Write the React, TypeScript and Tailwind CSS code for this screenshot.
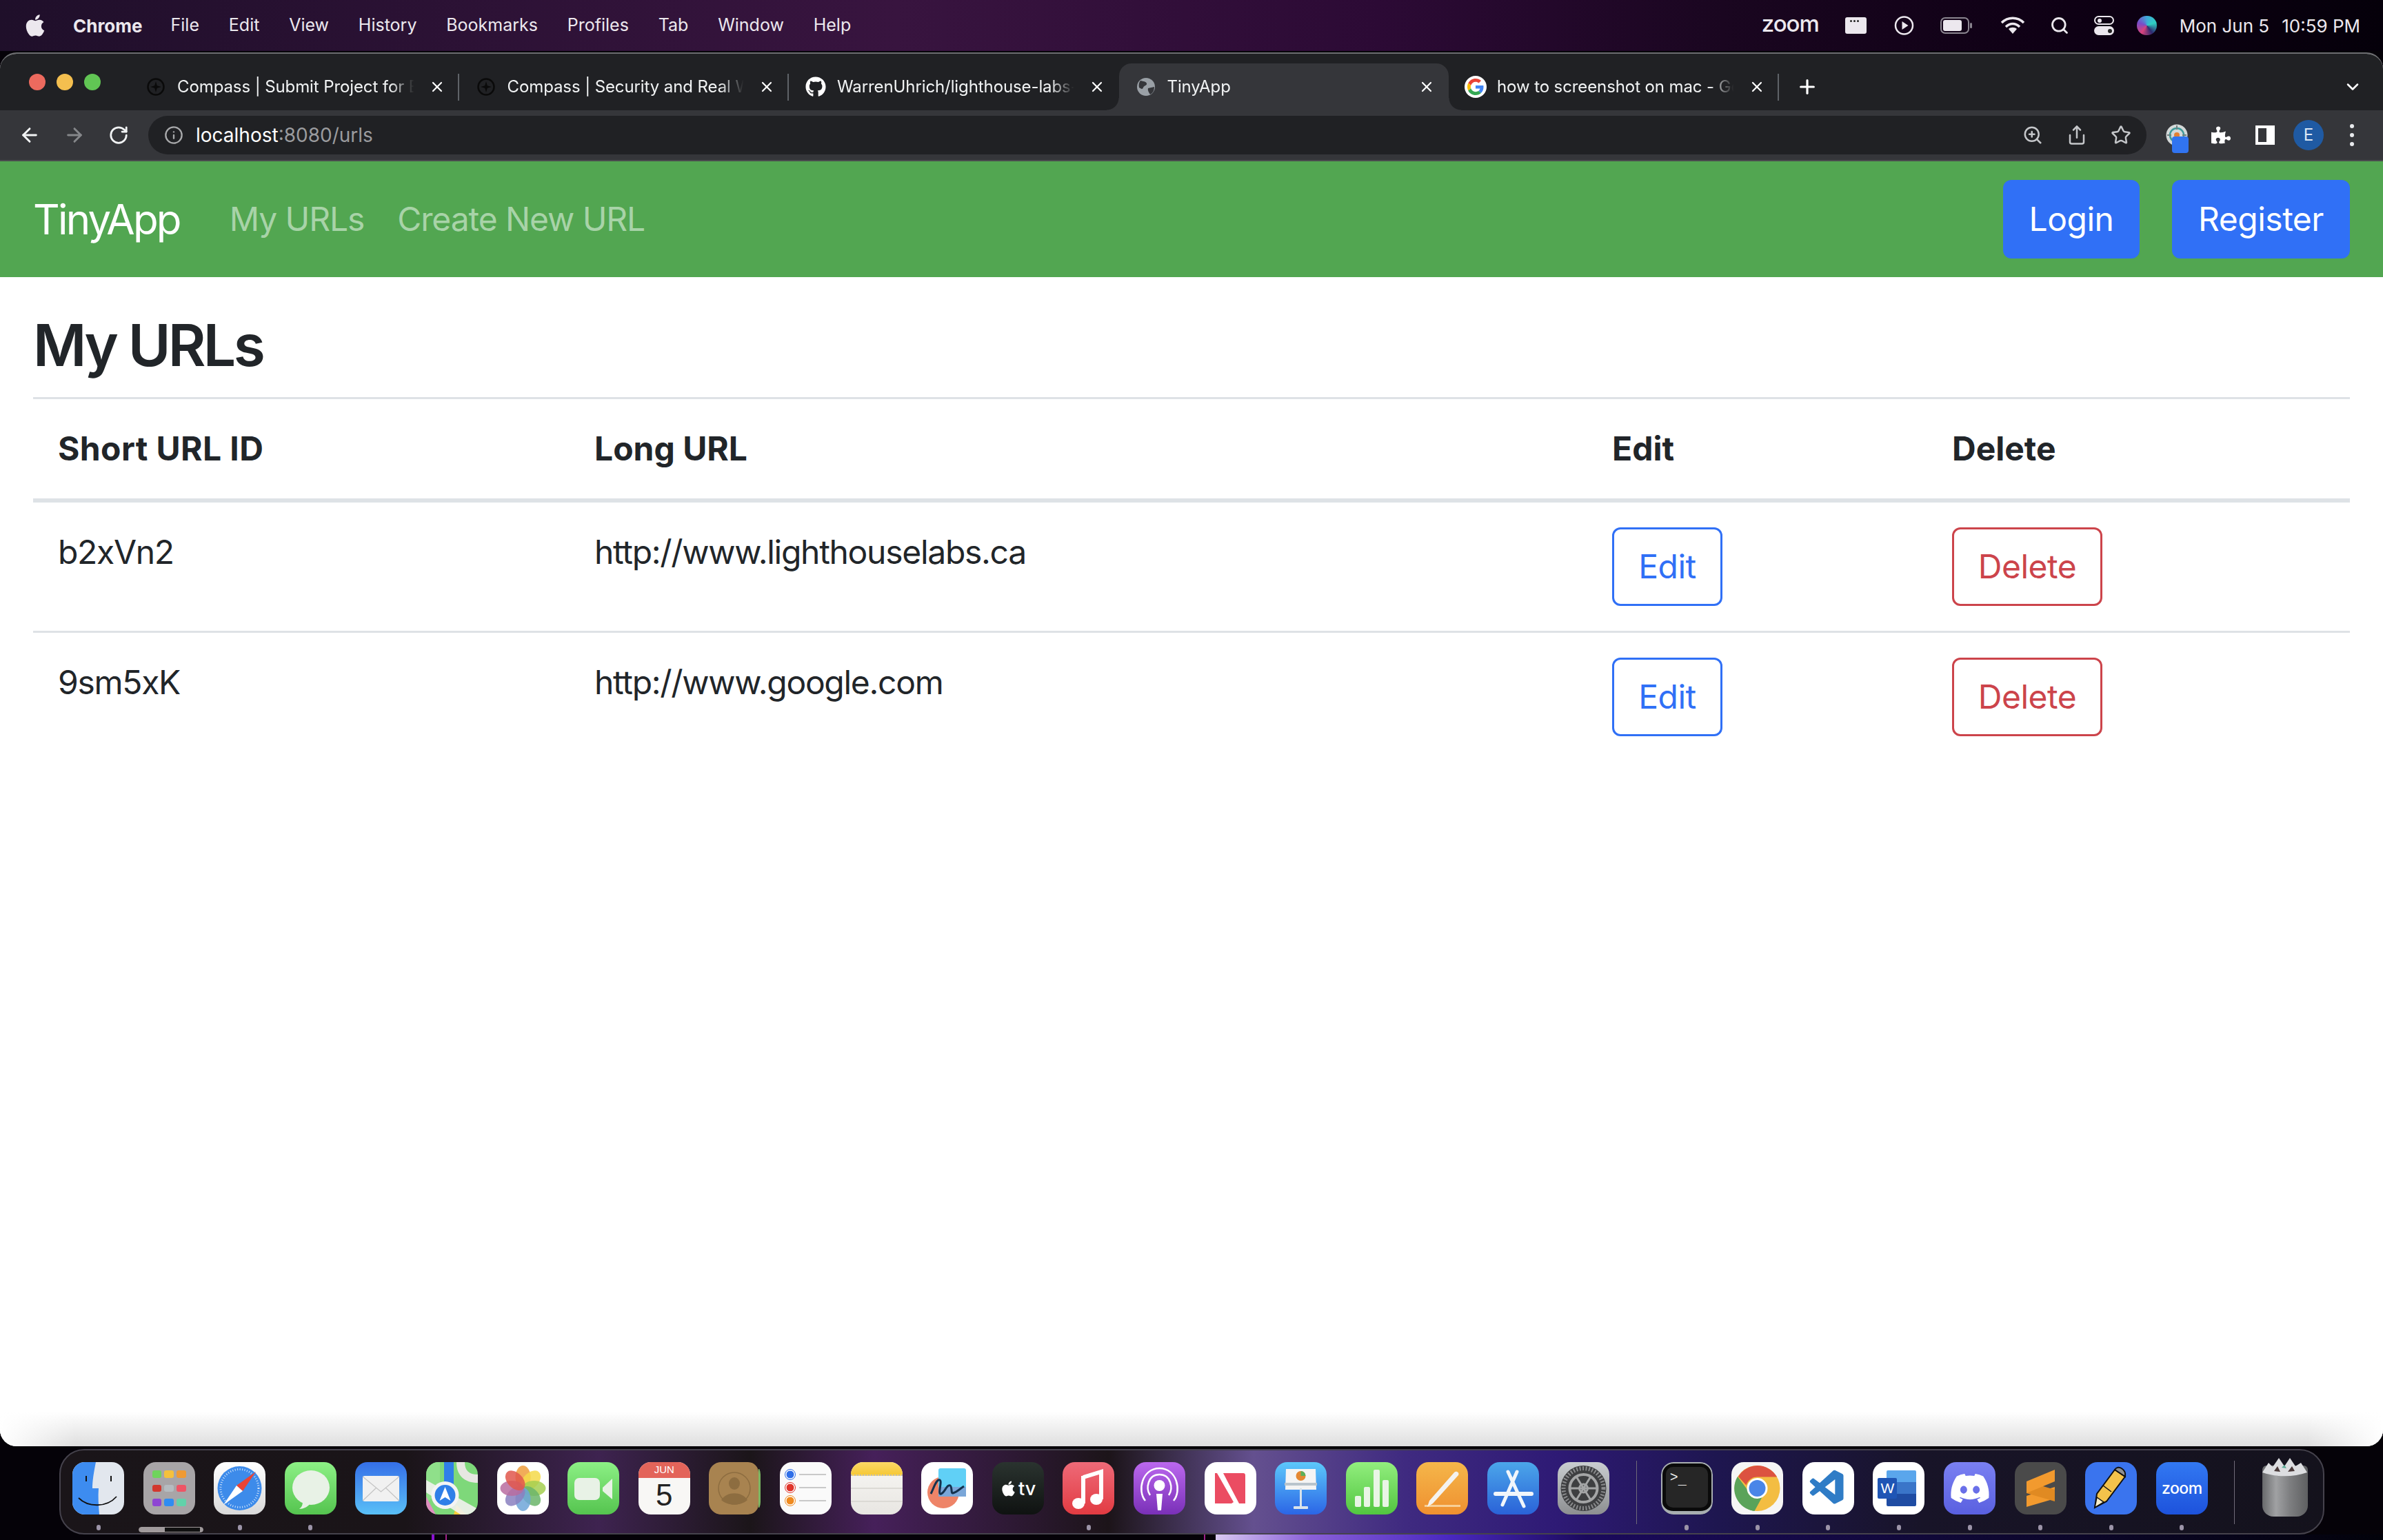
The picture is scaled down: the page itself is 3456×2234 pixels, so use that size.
import { ReactNode } from "react";
import {
  ArrowLeft,
  ArrowRight,
  ChevronDown,
  Info,
  Plus,
  RotateCw,
  Search,
  Share,
  Star,
  X,
  ZoomIn,
} from "lucide-react";
import { FaApple, FaDiscord, FaGithub, FaPuzzlePiece } from "react-icons/fa";
import { VscVscode } from "react-icons/vsc";

const menuItems = ["File", "Edit", "View", "History", "Bookmarks", "Profiles", "Tab", "Window", "Help"];

const urls = [
  { id: "b2xVn2", long: "http://www.lighthouselabs.ca" },
  { id: "9sm5xK", long: "http://www.google.com" },
];

const CompassIcon = () => (
  <svg viewBox="0 0 26 30" className="w-[26px] h-[30px] shrink-0" fill="none">
    <circle cx="13" cy="15" r="11.5" stroke="#0a0a0a" strokeWidth="2.5" />
    <path d="M13 7l1.8 6.2L21 15l-6.2 1.8L13 23l-1.8-6.2L5 15l6.2-1.8z" fill="#0a0a0a" />
  </svg>
);

const GoogleIcon = () => (
  <div className="w-[32px] h-[32px] shrink-0 rounded-full bg-white flex items-center justify-center">
    <svg viewBox="0 0 48 48" className="w-[24px] h-[24px]">
      <path fill="#ea4335" d="M24 9.5c3.5 0 6.7 1.2 9.2 3.6l6.9-6.9C35.9 2.4 30.5 0 24 0 14.6 0 6.5 5.4 2.6 13.2l8 6.2C12.4 13.7 17.700 9.500 24 9.500z" />
      <path fill="#4285f4" d="M47 24.500c0-1.600-.100-3.100-.400-4.500H24v9h12.900c-.600 3-2.200 5.500-4.800 7.200l7.700 6C44.400 38 47 31.800 47 24.500z" />
      <path fill="#fbbc05" d="M10.500 28.600c-.500-1.400-.800-3-.800-4.600s.300-3.200.800-4.600l-8-6.200C.900 16.500 0 20.100 0 24s.900 7.500 2.600 10.800z" />
      <path fill="#34a853" d="M24 48c6.500 0 11.900-2.100 15.900-5.800l-7.700-6c-2.200 1.500-4.900 2.300-8.200 2.300-6.300 0-11.600-4.200-13.500-9.900l-8 6.200C6.500 42.600 14.600 48 24 48z" />
    </svg>
  </div>
);

const GlobeIcon = () => (
  <svg viewBox="0 0 28 28" className="w-[28px] h-[28px] shrink-0">
    <circle cx="14" cy="14" r="13" fill="#9aa0a6" />
    <path d="M6 5c4 1 8 1 9 4s-4 3-5 6-3 2-6 0C3 11 4 7 6 5zM17 16c3-1 6-1 9-2 0 5-2 9-6 11-2-3-4-6-3-9z" fill="#35363a" />
  </svg>
);

const tabs = [
  { title: "Compass | Submit Project for E", icon: <CompassIcon /> },
  { title: "Compass | Security and Real W", icon: <CompassIcon /> },
  { title: "WarrenUhrich/lighthouse-labs-", icon: <FaGithub className="w-[30px] h-[30px] shrink-0 text-white" /> },
  { title: "TinyApp", icon: <GlobeIcon />, active: true },
  { title: "how to screenshot on mac - Go", icon: <GoogleIcon /> },
];

const Tab = ({ title, icon, active, divider }: { title: string; icon: ReactNode; active?: boolean; divider?: boolean }) => (
  <div
    className={`relative w-[478.500px] h-[68px] shrink-0 flex items-center pl-[26px] pr-[20px] gap-[18px] rounded-t-[18px] ${
      active ? "bg-[#35363a]" : ""
    }`}
  >
    {active && (
      <>
        <div className="absolute left-[-18px] bottom-0 w-[18px] h-[18px] bg-[radial-gradient(circle_at_0_0,#202124_17px,#35363a_18px)]" />
        <div className="absolute right-[-18px] bottom-0 w-[18px] h-[18px] bg-[radial-gradient(circle_at_100%_0,#202124_17px,#35363a_18px)]" />
      </>
    )}
    <div className="w-[26px] h-[32px] shrink-0 flex items-center justify-center">{icon}</div>
    <span className="flex-1 min-w-0 whitespace-nowrap text-[24px] tracking-[-0.100px] text-[#f1f3f4] [mask-image:linear-gradient(90deg,#000_89%,transparent_99%)]">
      {title}
    </span>
    <X className="w-[24px] h-[24px] shrink-0 text-white" strokeWidth={2.2} />
    {divider && <div className="absolute right-0 top-[15px] w-[2px] h-[39px] bg-[#5f6368]" />}
  </div>
);

const StatusIcons = () => (
  <div className="flex items-center text-[#ece8ee]">
    <span className="text-[33px] font-medium tracking-[-1px] w-[82px] text-center leading-none pb-[6px]">zoom</span>
    <div className="ml-[39px] w-[31px] h-[24px] rounded-[3px] bg-[#ece8ee] flex items-start gap-[2px] pl-[7px] pt-[4px]">
      <i className="w-[3px] h-[3px] rounded-full bg-[#222]" />
      <i className="w-[3px] h-[3px] rounded-full bg-[#222]" />
      <i className="w-[3px] h-[3px] rounded-full bg-[#222]" />
    </div>
    <svg viewBox="0 0 28 28" className="ml-[40px] w-[29px] h-[28px]" fill="none">
      <circle cx="14" cy="14" r="12.500" stroke="#ece8ee" strokeWidth="2.500" />
      <path d="M11 8l9 6-9 6z" fill="#ece8ee" />
    </svg>
    <svg viewBox="0 0 46 24" className="ml-[38px] w-[46px] h-[24px]" fill="none">
      <rect x="1" y="1" width="40" height="22" rx="6" stroke="#8b8690" strokeWidth="2" />
      <rect x="4" y="4" width="27" height="16" rx="3" fill="#ece8ee" />
      <rect x="43" y="8" width="3" height="8" rx="1.500" fill="#8b8690" />
    </svg>
    <svg viewBox="0 0 36 26" className="ml-[41px] w-[36px] h-[26px]" fill="none" stroke="#ece8ee" strokeWidth="3.500">
      <path d="M2 9c9-9 23-9 32 0M8 15c6-6 14-6 20 0" />
      <path d="M12 18c3-3 9-3 12 0l-6 7z" fill="#ece8ee" stroke="none" />
    </svg>
    <Search className="ml-[36px] w-[28px] h-[28px]" strokeWidth={2.4} />
    <div className="ml-[36px] w-[29px] h-[28px] flex flex-col gap-[2px]">
      <div className="h-[13px] rounded-full border-2 border-[#ece8ee] flex items-center pl-[3px]">
        <i className="w-[6px] h-[6px] rounded-full bg-[#ece8ee]" />
      </div>
      <div className="h-[13px] rounded-full bg-[#ece8ee] flex items-center justify-end pr-[3px]">
        <i className="w-[6px] h-[6px] rounded-full bg-[#222]" />
      </div>
    </div>
    <div className="ml-[33px] w-[29px] h-[28px] rounded-full bg-[conic-gradient(#3fa9d8,#2fd0c0,#2d2a70,#d7437c,#7a4bc8,#3fa9d8)]" />
    <span className="ml-[33px] text-[26px] whitespace-nowrap">Mon Jun 5</span>
    <span className="ml-[18px] text-[26px] whitespace-nowrap">10:59 PM</span>
  </div>
);

const Finder = () => (
  <div className="relative w-full h-full bg-[#e2e7ee]">
    <svg viewBox="0 0 75 76" className="absolute inset-0">
      <path d="M0 0h34c-3 15-5 27-5 38h9c-1 12 0 26 1 38H0z" fill="#3d8cf0" />
      <path d="M9 52c14 14 41 14 55-2" fill="none" stroke="#111" strokeWidth="1.800" />
      <rect x="19" y="20" width="2" height="8" fill="#111" />
      <rect x="55" y="20" width="2" height="8" fill="#111" />
    </svg>
  </div>
);

const launchColors = ["#6fd45c", "#f5c13c", "#ef9a34", "#d2382e", "#b5bcc0", "#ee5565", "#8e45d3", "#2f8cf2", "#62d2aa"];
const Launchpad = () => (
  <div className="w-full h-full bg-[#a8a5a7] grid grid-cols-3 gap-x-[4px] gap-y-[10px] px-[13px] py-[12px]">
    {launchColors.map((c) => (
      <div key={c} className="rounded-[3px]" style={{ background: c }} />
    ))}
  </div>
);

const Safari = () => (
  <svg viewBox="0 0 75 76" className="w-full h-full bg-[linear-gradient(#fff,#d9d9d9)]">
    <circle cx="37.500" cy="38" r="32" fill="#3d8bea" />
    <circle cx="37.500" cy="38" r="27.500" fill="none" stroke="#cfe3fb" strokeWidth="3" strokeDasharray="1 2.500" />
    <path d="M61 14L33 34l9 8z" fill="#ea4335" />
    <path d="M14 62l28-20-9-8z" fill="#fff" />
  </svg>
);

const Messages = () => (
  <svg viewBox="0 0 75 76" className="w-full h-full bg-[linear-gradient(#8cf085,#55c44f)]">
    <ellipse cx="38" cy="37" rx="27" ry="25" fill="#e8f2e6" />
    <path d="M26 56c0 6-1 9-5 12 6 0 12-3 15-7z" fill="#e8f2e6" />
  </svg>
);

const Mail = () => (
  <svg viewBox="0 0 75 76" className="w-full h-full bg-[linear-gradient(#356fe8,#5ac0f7)]">
    <rect x="11" y="20" width="53" height="37" rx="3" fill="#f1f1f1" />
    <path d="M11 21l26.500 22L64 21M11 56l20-19M64 56L44 37" fill="none" stroke="#c4c4c4" strokeWidth="1.200" />
  </svg>
);

const Maps = () => (
  <svg viewBox="0 0 75 76" className="w-full h-full bg-[#7ed87a]">
    <path d="M0 0h20v40L0 60z" fill="#8fe08a" />
    <path d="M44 0c0 20 12 30 31 30V18C62 18 56 12 56 0z" fill="#e7e7e2" />
    <path d="M0 50l14 26H0z" fill="#e08dc0" />
    <path d="M44 62l14 14h-18z" fill="#f5cf3c" />
    <path d="M0 26l75 42v8H50L0 44z" fill="#f2f2ee" opacity=".9" />
    <rect x="26" y="0" width="14" height="36" fill="#2f7fe8" />
    <circle cx="27.500" cy="48" r="20" fill="#f4f4f4" />
    <circle cx="27.500" cy="48" r="15" fill="#2f7fe8" />
    <path d="M27.500 36l8 20-8-5-8 5z" fill="#fff" />
  </svg>
);

const petalColors = ["#ef9d3c", "#f4d94a", "#a4cf50", "#6bb56a", "#6fa6d8", "#8a80c0", "#b86ca0", "#e0574c"];
const Photos = () => (
  <svg viewBox="0 0 75 76" className="w-full h-full bg-white">
    {petalColors.map((c, i) => (
      <ellipse key={c} cx="37.500" cy="22" rx="11" ry="17" fill={c} opacity=".85" transform={`rotate(${i * 45} 37.500 38)`} />
    ))}
  </svg>
);

const FaceTime = () => (
  <svg viewBox="0 0 75 76" className="w-full h-full bg-[linear-gradient(#8cf085,#55c44f)]">
    <rect x="10" y="23" width="37" height="32" rx="7" fill="#e8f2e6" />
    <path d="M51 37l14-13v30L51 42z" fill="#e8f2e6" />
  </svg>
);

const CalendarTile = () => (
  <div className="w-full h-full bg-[#f8f7f5] flex flex-col items-center font-['Liberation_Sans',sans-serif]">
    <div className="w-full h-[23px] bg-[#e3645a] text-white text-[15px] leading-[22px] text-center">JUN</div>
    <div className="text-[44px] leading-[50px] text-[#222]">5</div>
  </div>
);

const Contacts = () => (
  <svg viewBox="0 0 75 76" className="w-full h-full">
    <path d="M72 10h3v56h-3z" fill="#7bb662" />
    <rect width="72" height="76" rx="15" fill="#a88350" />
    <circle cx="37" cy="38" r="23" fill="none" stroke="#8d6d40" strokeWidth="1.500" />
    <ellipse cx="37" cy="31" rx="8" ry="9" fill="#8d6d40" />
    <path d="M18 55c8-13 30-13 38 0-10 9-28 9-38 0z" fill="#8d6d40" />
  </svg>
);

const Reminders = () => (
  <svg viewBox="0 0 75 76" className="w-full h-full bg-[#fafafa]">
    {[["#2f6fe8", 18], ["#e0352b", 37], ["#ef8a1f", 56]].map(([c, y]) => (
      <g key={c as string}>
        <circle cx="15" cy={y as number} r="6" fill={c as string} stroke="#fff" strokeWidth="1" />
        <circle cx="15" cy={y as number} r="7.500" fill="none" stroke={c as string} strokeWidth="1" />
        <rect x="28" y={(y as number) - 1} width="39" height="2" fill="#c9c9c9" />
      </g>
    ))}
  </svg>
);

const Notes = () => (
  <div className="w-full h-full bg-[linear-gradient(#f8f7f4,#e8e6e2)] flex flex-col">
    <div className="h-[20px] bg-[linear-gradient(#fbd766,#f6c937)] border-b-2 border-dotted border-[#bdbab4]" />
    <div className="h-[18px] border-b-2 border-[#dcdad5] mt-[1px]" />
    <div className="h-[19px] border-b-2 border-[#dcdad5]" />
  </div>
);

const Freeform = () => (
  <svg viewBox="0 0 75 76" className="w-full h-full bg-white">
    <circle cx="32" cy="44" r="23" fill="#ee8468" />
    <rect x="25" y="9" width="40" height="41" rx="3" fill="#60d0f6" />
    <rect x="25" y="36" width="40" height="14" fill="#7aa6d8" />
    <path d="M14 46c4-8 8-22 13-20 4 2-4 22 2 20 6-3 8-14 13-12 3 2 1 12 4 11 5-1 10-6 16-10" fill="none" stroke="#14324f" strokeWidth="3" />
  </svg>
);

const TvTile = () => (
  <div className="w-full h-full bg-[linear-gradient(#2a332f,#0f1211)] flex items-center justify-center gap-[2px] text-white">
    <FaApple className="w-[25px] h-[25px]" />
    <span className="text-[27px] font-medium leading-none font-['Inter',sans-serif]">tv</span>
  </div>
);

const MusicTile = () => (
  <svg viewBox="0 0 75 76" className="w-full h-full bg-[linear-gradient(#ee6a78,#e23b42)]">
    <path d="M30 22l26-8v40" fill="none" stroke="#fff" strokeWidth="6" />
    <path d="M30 20v40" stroke="#fff" strokeWidth="6" />
    <ellipse cx="23" cy="60" rx="9" ry="8" fill="#fff" />
    <ellipse cx="49" cy="54" rx="9" ry="8" fill="#fff" />
  </svg>
);

const Podcasts = () => (
  <svg viewBox="0 0 75 76" className="w-full h-full bg-[linear-gradient(#bb68ee,#7a30b8)]" fill="none" stroke="#fff" strokeWidth="2.500">
    <path d="M17 56C5 42 12 9 37.500 9S70 42 58 56" />
    <path d="M24 48c-7-10-3-30 13.500-30S58 38 51 48" />
    <circle cx="37.500" cy="34" r="8" fill="#fff" stroke="none" />
    <path d="M33 46h9l-2 24h-5z" fill="#fff" stroke="none" />
  </svg>
);

const NewsTile = () => (
  <svg viewBox="0 0 75 76" className="w-full h-full bg-white">
    <path d="M15 16h3l24 42-3 2H15zM27 16h29c2 0 3 1 3 3v41h-9z" fill="#eb4c62" />
  </svg>
);

const Keynote = () => (
  <svg viewBox="0 0 75 76" className="w-full h-full bg-[linear-gradient(#5cc8fb,#2b65e6)]">
    <path d="M16 10h43l1 30H15z" fill="#f4f4f4" />
    <rect x="14" y="30" width="47" height="4" fill="#b9c4cc" />
    <circle cx="37.500" cy="20" r="7" fill="#e48832" />
    <path d="M37.500 20v-7a7 7 0 017 7z" fill="#5bb05a" />
    <rect x="36" y="38" width="3" height="28" fill="#d9e3ea" />
    <rect x="27" y="64" width="21" height="4" rx="1" fill="#d9e3ea" />
  </svg>
);

const NumbersTile = () => (
  <svg viewBox="0 0 75 76" className="w-full h-full bg-[linear-gradient(#92ee7e,#52c640)]" fill="#e9f5e5">
    <rect x="13" y="49" width="9" height="16" rx="2" />
    <rect x="26" y="36" width="9" height="29" rx="2" />
    <rect x="40" y="11" width="9" height="54" rx="2" />
    <rect x="53" y="26" width="9" height="39" rx="2" />
  </svg>
);

const Pages = () => (
  <svg viewBox="0 0 75 76" className="w-full h-full bg-[linear-gradient(#f5b64a,#ef9030)]">
    <rect x="12" y="62" width="52" height="3" fill="#f8cf96" />
    <path d="M55 15c3-3 8 0 6 4L24 60l-8 5 3-9z" fill="#f4f2ef" />
  </svg>
);

const AppStore = () => (
  <svg viewBox="0 0 75 76" className="w-full h-full bg-[linear-gradient(#4ba6ea,#2a62d8)]" stroke="#f1f6fb" strokeLinecap="round" fill="none">
    <path d="M30 14l23 50M43 14L22 62" strokeWidth="5" />
    <path d="M12 46h52" strokeWidth="6" />
  </svg>
);

const SettingsTile = () => (
  <svg viewBox="0 0 75 76" className="w-full h-full bg-[linear-gradient(#c9cdd0,#8d8f91)]" fill="none">
    <circle cx="37.500" cy="38" r="33" fill="#3e3f41" />
    <circle cx="37.500" cy="38" r="29" stroke="#8a8b8d" strokeWidth="6" strokeDasharray="2 2.500" />
    <circle cx="37.500" cy="38" r="20" stroke="#a4a5a6" strokeWidth="4" />
    <circle cx="37.500" cy="38" r="6" stroke="#a4a5a6" strokeWidth="3" />
    <path d="M18 38h39M27 21l21 34M48 21L27 55" stroke="#a4a5a6" strokeWidth="3" />
  </svg>
);

const Terminal = () => (
  <div className="w-full h-full bg-[#0a0a0a] border-2 border-[#a8aeb0] border-b-[5px] rounded-[18px] p-[5px]">
    <div className="w-full h-full rounded-[10px] bg-[#262626] text-[#eee] font-['Liberation_Mono',monospace] text-[20px] leading-[22px] pl-[6px] pt-[5px]">
      &gt;<span className="relative top-[4px]">_</span>
    </div>
  </div>
);

const ChromeTile = () => (
  <svg viewBox="0 0 75 76" className="w-full h-full bg-[#f5f5f5]">
    <circle cx="37.500" cy="38" r="33" fill="#f3bd42" />
    <path d="M37.500 5a33 33 0 0128.600 16.500H37.500c-9 0-14 6-16 12L10 21A33 33 0 0137.500 5z" fill="#dc5240" />
    <path d="M9 21a33 33 0 0024.500 50l12-22c-8 3-17 0-21-7z" fill="#5aa35a" />
    <circle cx="37.500" cy="38" r="15" fill="#fff" />
    <circle cx="37.500" cy="38" r="12" fill="#4a86e8" />
  </svg>
);

const Word = () => (
  <div className="relative w-full h-full bg-white">
    <div className="absolute left-[20px] top-[12px] w-[43px] h-[52px] rounded-[2px] bg-[linear-gradient(#5aa6ec_0_33%,#3a75c9_33%_66%,#1f4ca3_66%)]" />
    <div className="absolute left-[7px] top-[23px] w-[28px] h-[30px] rounded-[2px] bg-[#1f55b5] text-white text-center text-[21px] leading-[30px] font-['Liberation_Sans',sans-serif]">
      W
    </div>
  </div>
);

const Sublime = () => (
  <svg viewBox="0 0 75 76" className="w-full h-full bg-[#4a4a4a]">
    <path d="M17 49l41-13v17L17 65z" fill="#f29a2e" />
    <path d="M17 28l41 12v17L17 45z" fill="#e08a22" />
    <path d="M17 28l41-17v17L17 45z" fill="#f29a2e" />
  </svg>
);

const CotEditor = () => (
  <svg viewBox="0 0 75 76" className="w-full h-full bg-[#3a74ee]">
    <path d="M14 66l3-20 26-35 15 10-27 36z" fill="#f3c24b" stroke="#111" strokeWidth="2" />
    <path d="M14 66l3-15 10 7z" fill="#f6ecc8" stroke="#111" strokeWidth="1.500" />
    <path d="M43 11c5-8 17 0 15 10z" fill="#8f9092" stroke="#111" strokeWidth="2" />
    <path d="M26 34l12 9" stroke="#111" strokeWidth="1.500" />
  </svg>
);

const Trash = () => (
  <div className="relative w-[75px] h-[88px] mt-[-7px]">
    <div className="absolute left-[5px] top-[12px] w-[66px] h-[74px] rounded-b-[16px] rounded-t-[6px] bg-[linear-gradient(90deg,#68696b,#a0a1a3_30%,#7e7f81_60%,#5e5f61)]" />
    <svg viewBox="0 0 75 30" className="absolute left-0 top-0 w-[75px] h-[30px]">
      <path d="M5 22l9-14 6 6 9-13 8 12 8-12 8 12 8-5 9 14c-20 7-45 7-65 0z" fill="#dcdde0" />
      <path d="M22 20l5-7 4 8zM42 21l6-8 4 7z" fill="#4a3a3a" />
      <path d="M33 15l4-4 3 5z" fill="#5fae9a" />
    </svg>
  </div>
);

const ZoomTile = () => (
  <div className="w-full h-full bg-[linear-gradient(#3278f2,#1d52dc)] flex items-center justify-center text-white text-[23px] font-medium tracking-[-0.500px] font-['Inter',sans-serif]">
    zoom
  </div>
);

type DockEntry = { key: string; node: ReactNode; dot?: boolean };

const DockIcon = ({ node, dot }: DockEntry) => (
  <div className="w-[75px] shrink-0 flex flex-col items-center">
    <div className="w-[75px] h-[76px] rounded-[18px] overflow-hidden">{node}</div>
    <div className={`mt-[15px] w-[6px] h-[8px] rounded-full ${dot ? "bg-[#9c94a8]" : ""}`} />
  </div>
);

const firstApps: DockEntry[] = [
  { key: "finder", node: <Finder />, dot: true },
  { key: "launchpad", node: <Launchpad /> },
  { key: "safari", node: <Safari />, dot: true },
  { key: "messages", node: <Messages />, dot: true },
  { key: "mail", node: <Mail /> },
  { key: "maps", node: <Maps /> },
  { key: "photos", node: <Photos /> },
  { key: "facetime", node: <FaceTime /> },
  { key: "calendar", node: <CalendarTile /> },
  { key: "contacts", node: <Contacts /> },
  { key: "reminders", node: <Reminders /> },
  { key: "notes", node: <Notes /> },
  { key: "freeform", node: <Freeform /> },
  { key: "tv", node: <TvTile /> },
  { key: "music", node: <MusicTile />, dot: true },
  { key: "podcasts", node: <Podcasts /> },
  { key: "news", node: <NewsTile /> },
  { key: "keynote", node: <Keynote /> },
  { key: "numbers", node: <NumbersTile /> },
  { key: "pages", node: <Pages /> },
  { key: "appstore", node: <AppStore /> },
  { key: "settings", node: <SettingsTile /> },
];

const secondApps: DockEntry[] = [
  { key: "terminal", node: <Terminal />, dot: true },
  { key: "chrome", node: <ChromeTile />, dot: true },
  {
    key: "vscode",
    node: (
      <div className="w-full h-full bg-white flex items-center justify-center">
        <VscVscode className="w-[60px] h-[60px] text-[#2f7cc6]" />
      </div>
    ),
    dot: true,
  },
  { key: "word", node: <Word />, dot: true },
  {
    key: "discord",
    node: (
      <div className="w-full h-full bg-[linear-gradient(#7a80f2,#5a60e0)] flex items-center justify-center">
        <FaDiscord className="w-[60px] h-[60px] text-white" />
      </div>
    ),
    dot: true,
  },
  { key: "sublime", node: <Sublime />, dot: true },
  { key: "coteditor", node: <CotEditor />, dot: true },
  { key: "zoom", node: <ZoomTile />, dot: true },
];

const DockDivider = () => <div className="ml-[11px] mr-[7px] mt-[-2px] w-[1px] h-[92px] bg-[#6f6a78] shrink-0" />;

const Dock = () => (
  <div className="relative w-[3285px] h-[124px] shrink-0 ml-[86px] mt-[4px] pl-[17px] pt-[17px] flex gap-[27.600px] rounded-[36px] border-2 border-[#45424c] bg-[linear-gradient(90deg,#1a1519_0,#1a1418_500px,#3e2350_780px,#1b1519_1000px,#46205a_1180px,#1c1419_1520px,#64508f_1730px,#3f2a80_1950px,#2e1a75_2170px,#1e1650_2400px,#181428_2700px,#14121c_3285px)]">
    {firstApps.map((a) => (
      <DockIcon {...a} />
    ))}
    <DockDivider />
    {secondApps.map((a) => (
      <DockIcon {...a} />
    ))}
    <DockDivider />
    <Trash />
    <div className="absolute left-[113px] top-[111px] w-[94px] h-[8px] rounded-full bg-[linear-gradient(90deg,#a09a9c_40%,#111_40%_96%,#a09a9c_96%)] border border-[#a09a9c]" />
  </div>
);

export default function App() {
  return (
    <div className="w-[3456px] h-[2234px] overflow-hidden flex flex-col font-['Inter',sans-serif] bg-[#050208]">
      <header className="h-[74px] shrink-0 flex items-center justify-between pl-[36px] pr-[33px] text-[25px] text-[#ece8ee] bg-[linear-gradient(90deg,#1f0f2a_0,#38143f_1300px,#2c0a35_2000px,#1a0620_2500px,#0e0014_3000px,#05000a_3456px)]">
        <div className="flex items-center">
          <FaApple className="w-[30px] h-[36px] mr-[40px]" />
          <span className="font-bold text-[26px] mr-[41px]">Chrome</span>
          <div className="flex gap-[42.800px]">
            {menuItems.map((m) => (
              <span key={m}>{m}</span>
            ))}
          </div>
        </div>
        <StatusIcons />
      </header>

      <div className="h-[2022px] shrink-0 mt-[2px] flex flex-col rounded-t-[24px] rounded-b-[24px] overflow-hidden border-t-2 border-[#6c6d70] bg-white">
        <div className="h-[82px] shrink-0 bg-[#202124] flex items-end">
          <div className="w-[187px] h-[82px] shrink-0 flex items-center gap-[16px] pl-[42px]">
            <i className="w-[24px] h-[24px] rounded-full bg-[#ec6a5e]" />
            <i className="w-[24px] h-[24px] rounded-full bg-[#f4bf4f]" />
            <i className="w-[24px] h-[24px] rounded-full bg-[#61c554]" />
          </div>
          {tabs.map((t, i) => (
            <Tab key={t.title} title={t.title} icon={t.icon} active={t.active} divider={i === 0 || i === 1 || i === 4} />
          ))}
          <div className="flex-1 h-[68px] flex items-center justify-between pl-[25px] pr-[30px] text-white">
            <Plus className="w-[32px] h-[32px]" strokeWidth={2.4} />
            <ChevronDown className="w-[28px] h-[28px]" strokeWidth={2.2} />
          </div>
        </div>

        <div className="h-[74px] shrink-0 bg-[#35363a] border-b-2 border-[#4a4b4e] flex items-center pl-[27px] text-[#f1f3f4]">
          <ArrowLeft className="w-[32px] h-[32px]" strokeWidth={2.2} />
          <ArrowRight className="ml-[33px] w-[32px] h-[32px] text-[#85878a]" strokeWidth={2.2} />
          <RotateCw className="ml-[33px] w-[30px] h-[30px]" strokeWidth={2.2} />
          <div className="ml-[28px] w-[2898px] h-[56px] rounded-full bg-[#202124] flex items-center pl-[23px] pr-[22px]">
            <Info className="w-[28px] h-[28px] text-[#a8a9ab]" strokeWidth={2} />
            <span className="ml-[18px] text-[28px] text-white">localhost</span>
            <span className="text-[28px] text-[#9a9b9e]">:8080/urls</span>
            <div className="ml-auto flex items-center gap-[34px] text-[#c4c6c9]">
              <ZoomIn className="w-[30px] h-[30px]" strokeWidth={2} />
              <Share className="w-[30px] h-[30px]" strokeWidth={2} />
              <Star className="w-[30px] h-[30px]" strokeWidth={2} />
            </div>
          </div>
          <div className="relative ml-[28px] w-[32px] h-[32px]">
            <svg viewBox="0 0 32 32" className="w-[32px] h-[32px]" fill="none">
              <circle cx="16" cy="16" r="15.500" fill="#d4d8d8" />
              <circle cx="16" cy="16" r="10" stroke="#3f9a9a" strokeWidth="2.500" />
              <circle cx="16" cy="16" r="4" fill="#e38032" />
              <path d="M16 2v6M16 24v6M2 16h6M24 16h6" stroke="#6f7f80" strokeWidth="2" />
            </svg>
            <div className="absolute left-[9px] top-[18px] w-[24px] h-[24px] rounded-[4px] bg-[#3174f0]" />
          </div>
          <FaPuzzlePiece className="ml-[34px] w-[28px] h-[28px] text-white" />
          <div className="ml-[36px] w-[28px] h-[28px] bg-white flex justify-start pl-[4px] py-[4px]">
            <div className="w-[12px] h-full bg-[#35363a]" />
          </div>
          <div className="ml-[27px] w-[44px] h-[44px] rounded-full bg-[#1f5aa3] flex items-center justify-center text-[24px] text-[#dce7f5]">E</div>
          <div className="ml-[38px] flex flex-col gap-[7px]">
            <i className="w-[6px] h-[6px] rounded-full bg-[#e8eaed]" />
            <i className="w-[6px] h-[6px] rounded-full bg-[#e8eaed]" />
            <i className="w-[6px] h-[6px] rounded-full bg-[#e8eaed]" />
          </div>
        </div>

        <nav className="h-[168px] shrink-0 bg-[#52a651] flex items-center justify-between px-[48px]">
          <div className="flex items-center">
            <span className="text-[60px] text-white tracking-[-2.800px]">TinyApp</span>
            <a className="ml-[72px] text-[48px] text-[#a8d3a8] tracking-[-1.100px]">My URLs</a>
            <a className="ml-[48px] text-[48px] text-[#a8d3a8] tracking-[-1.100px]">Create New URL</a>
          </div>
          <div className="flex gap-[47px]">
            <button className="w-[198px] h-[114px] rounded-[12px] bg-[#3070f6] text-white text-[48px] tracking-[-0.500px]">Login</button>
            <button className="w-[258px] h-[114px] rounded-[12px] bg-[#3070f6] text-white text-[48px] tracking-[-0.500px]">Register</button>
          </div>
        </nav>

        <main className="flex-1 px-[48px] pt-[41px] text-[#212529]">
          <h1 className="text-[84px] leading-[115px] font-semibold tracking-[-3.700px] mb-[18px]">My URLs</h1>
          <table className="w-full table-fixed border-collapse text-[48px]">
            <colgroup>
              <col className="w-[778px]" />
              <col className="w-[1476px]" />
              <col className="w-[493px]" />
              <col />
            </colgroup>
            <thead>
              <tr className="border-t-[3px] border-b-[6px] border-t-[#dee2e6] border-b-[#dee2e6]">
                <th className="p-[36px] text-left font-bold leading-[72px] tracking-[0.400px]">Short URL ID</th>
                <th className="p-[36px] text-left font-bold leading-[72px]">Long URL</th>
                <th className="p-[36px] text-left font-bold leading-[72px]">Edit</th>
                <th className="p-[36px] text-left font-bold leading-[72px]">Delete</th>
              </tr>
            </thead>
            <tbody>
              {urls.map((u, i) => (
                <tr key={u.id} className={i === 0 ? "border-b-[3px] border-[#dee2e6]" : ""}>
                  <td className="p-[36px] align-top leading-[72px] tracking-[-1.300px]">{u.id}</td>
                  <td className="p-[36px] align-top leading-[72px] tracking-[-1.300px]">{u.long}</td>
                  <td className="p-[36px] align-top">
                    <button className="w-[160px] h-[114px] rounded-[12px] border-[3px] border-[#3070f6] text-[#3070f6] text-[48px] tracking-[-0.500px]">Edit</button>
                  </td>
                  <td className="p-[36px] align-top">
                    <button className="w-[218px] h-[114px] rounded-[12px] border-[3px] border-[#cc444b] text-[#cc444b] text-[48px] tracking-[-0.500px]">Delete</button>
                  </td>
                </tr>
              ))}
            </tbody>
          </table>
        </main>
        <div className="h-[50px] shrink-0 bg-[linear-gradient(90deg,#fff,transparent_110px,transparent_calc(100%-110px),#fff),linear-gradient(180deg,#fff,#dedede)]" />
      </div>

      <Dock />
      <div className="flex-1 bg-[linear-gradient(90deg,#050208_626px,#8a10d0_626px_630px,#050208_630px_646px,#a0208a_646px_648px,#050208_648px_1746px,#a0208a_1746px_1748px,#050208_1748px_1763px,#d8c8f0_1763px,#8a60d8_1900px,#4a28c0_2100px,#1b0a5c_2300px,#100838_2800px,#02020a_3456px)]" />
    </div>
  );
}
